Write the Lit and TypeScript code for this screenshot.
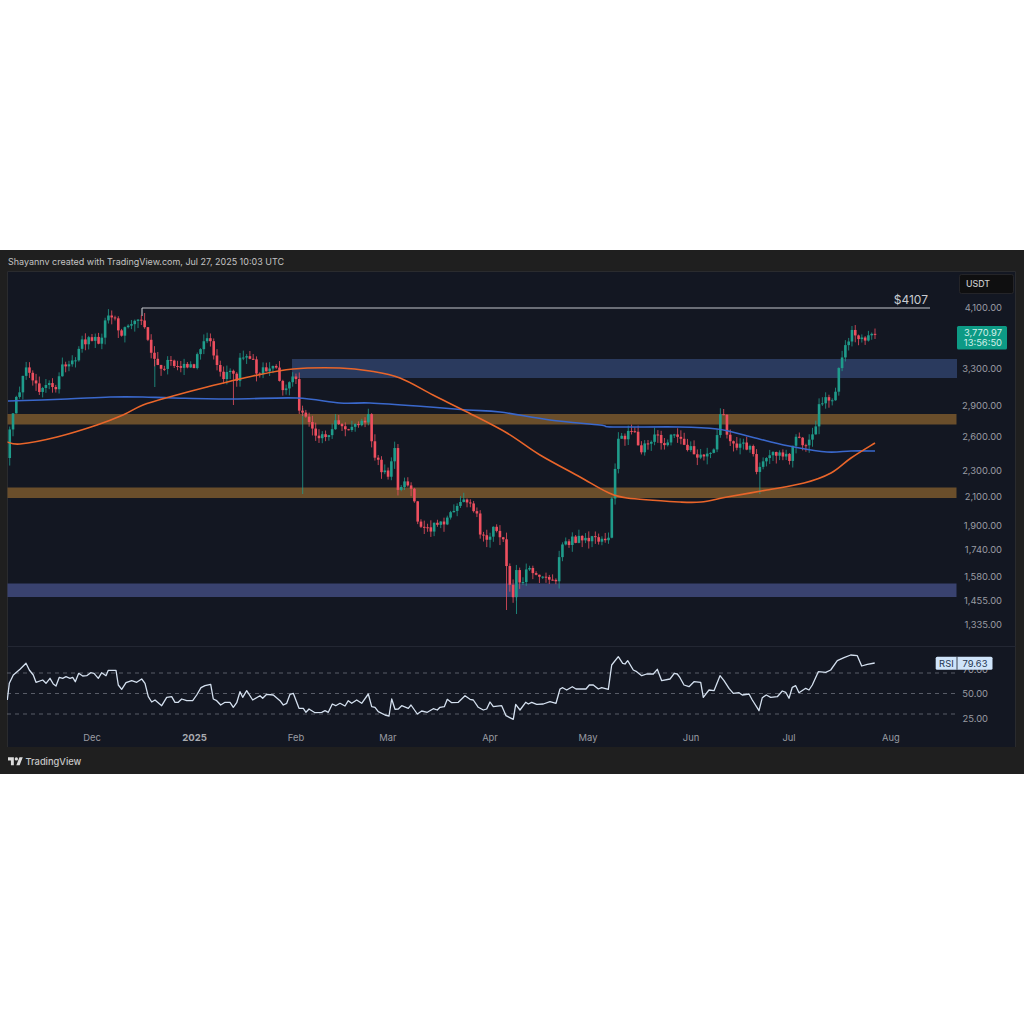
import { LitElement, html, css, svg } from "lit";
import { customElement } from "lit/decorators.js";

type P = [number, number];

const PRICE: P[] = [[7,458],[10,425],[15,405],[20,387],[27,365],[33,377],[38,390],[50,380],[58,390],[60,367],[75,363],[80,342],[88,340],[95,338],[100,343],[103,328],[108,317],[117,317],[120,343],[125,328],[133,323],[143,320],[148,343],[153,360],[162,373],[168,355],[177,367],[193,367],[202,343],[213,340],[214,362],[222,378],[233,373],[237,382],[240,358],[253,358],[254,375],[265,368],[277,370],[283,390],[288,385],[295,372],[298,388],[299,408],[308,417],[315,433],[330,438],[335,423],[340,425],[355,428],[370,415],[372,447],[382,470],[390,482],[392,447],[396,447],[397,488],[407,482],[417,508],[418,530],[430,528],[440,523],[447,520],[453,512],[463,502],[477,512],[480,537],[488,540],[492,527],[505,540],[507,577],[513,597],[517,563],[520,588],[527,568],[540,578],[557,578],[560,548],[573,540],[593,537],[610,540],[612,495],[615,468],[618,440],[628,435],[632,428],[642,450],[660,432],[662,445],[673,435],[684,445],[704,458],[716,445],[719,417],[726,418],[727,433],[734,445],[751,447],[757,473],[762,458],[771,455],[782,453],[791,458],[794,442],[799,438],[804,445],[814,437],[817,417],[819,402],[834,400],[837,385],[839,362],[844,352],[851,333],[858,337],[861,342],[866,338],[875,333]];

const BLUE: P[] = [[8,401],[67,399],[110,397],[143,397],[173,398],[233,399],[297,398],[340,403],[370,403],[417,406],[467,410],[500,412],[550,420],[600,425],[613,427],[680,427],[717,429],[744,435],[771,442],[794,447],[827,452],[851,451],[875,451]];

const ORANGE: P[] = [[7,442],[20,444],[57,437],[97,425],[123,415],[143,405],[173,396],[207,387],[253,376],[293,369],[340,368],[370,371],[400,378],[433,395],[467,412],[507,433],[540,455],[580,477],[607,492],[627,498],[680,502],[701,502],[727,497],[767,490],[804,483],[831,473],[851,458],[875,443]];

const z4: P[] = [[22,570],[28,520],[40,495],[60,478],[78,460],[88,480],[100,495],[108,517],[128,510],[138,520],[150,505],[160,522],[168,528],[178,502],[188,505],[198,500],[210,505],[218,502],[226,515],[236,490],[248,498],[260,497],[272,488],[282,490],[295,505],[305,488],[318,497],[325,481],[348,481],[355,525],[365,538],[378,518],[395,512],[410,517],[425,507],[435,520],[445,560],[455,576],[465,570],[485,587],[500,562],[515,560],[525,577],[535,577],[545,567],[560,572],[578,572],[590,555],[603,533],[615,527],[632,523],[640,567],[650,572],[662,585],[675,577],[690,577],[700,592],[710,578],[720,545],[728,562],[740,542],[758,570],[780,557],[788,565],[800,553],[820,555],[840,572],[850,585],[860,580],[870,553],[880,550],[897,595],[910,595],[918,607],[927,597],[945,608],[965,607],[975,602],[985,607],[997,582],[1007,587],[1020,580]];
const z5: P[] = [[15,588],[25,572],[35,580],[50,570],[65,580],[85,552],[95,590],[105,592],[115,605],[135,615],[147,618],[155,567],[165,598],[175,597],[185,587],[205,595],[213,585],[232,612],[245,603],[262,607],[280,596],[292,600],[300,592],[313,590],[322,568],[335,578],[355,577],[375,557],[390,568],[400,570],[415,592],[430,600],[440,597],[450,576],[460,590],[485,587],[498,617],[520,628],[527,583],[540,600],[557,577],[565,582],[575,577],[590,583],[610,582],[630,575],[648,580],[660,537],[668,533],[680,540],[697,530],[708,537],[738,537],[748,525],[760,525],[775,537],[785,533],[805,538],[815,465],[835,440],[848,460],[855,462],[863,452],[880,480],[890,485],[905,497],[920,492],[940,492],[952,478],[965,512],[990,507],[1003,490],[1012,492],[1020,503]];
const z6: P[] = [[0,525],[15,530],[30,515],[50,517],[58,562],[75,540],[90,542],[108,497],[120,512],[135,535],[148,550],[165,548],[175,555],[195,552],[205,570],[225,602],[235,563],[247,555],[260,562],[280,560],[295,543],[305,547],[315,565],[325,532],[335,527],[345,548],[365,535],[375,540],[385,525],[403,485],[425,487],[440,480],[460,452],[480,443],[500,435],[520,437],[533,468],[550,463],[572,459]];
const RSI: P[] = [
  ...z4.map(([x, y]): P => [x / 3, 510 + y / 3]),
  ...z5.map(([x, y]): P => [340 + x / 3, 510 + y / 3]),
  ...z6.map(([x, y]): P => [684 + x / 3, 510 + y / 3]),
];

const pts = (a: P[]) => a.map(([x, y]) => `${x.toFixed(1)},${y.toFixed(1)}`).join(" ");
// Catmull-Rom through the moving-average anchors, so the averages read as curves.
const smooth = (a: P[]) => {
  let d = `M${a[0][0]} ${a[0][1]}`;
  for (let i = 0; i < a.length - 1; i++) {
    const p0 = a[Math.max(i - 1, 0)];
    const p1 = a[i];
    const p2 = a[i + 1];
    const p3 = a[Math.min(i + 2, a.length - 1)];
    const c1x = p1[0] + (p2[0] - p0[0]) / 6;
    const c1y = p1[1] + (p2[1] - p0[1]) / 6;
    const c2x = p2[0] - (p3[0] - p1[0]) / 6;
    const c2y = p2[1] - (p3[1] - p1[1]) / 6;
    d += `C${c1x.toFixed(1)} ${c1y.toFixed(1)} ${c2x.toFixed(1)} ${c2y.toFixed(1)} ${p2[0]} ${p2[1]}`;
  }
  return d;
};
const interp = (a: P[], x: number) => {
  for (let i = 1; i < a.length; i++) {
    if (x <= a[i][0]) {
      const [x0, y0] = a[i - 1];
      const [x1, y1] = a[i];
      return y0 + ((y1 - y0) * (x - x0)) / Math.max(x1 - x0, 0.01);
    }
  }
  return a[a.length - 1][1];
};
const rnd = (i: number) => {
  const s = Math.sin(i * 127.1 + 11.7) * 43758.5453;
  return s - Math.floor(s);
};

const WICK_LOW: Record<number, number> = { 233: 405, 760: 494, 507: 610 };
const WICK_HIGH: Record<number, number> = { 723: 409, 851: 326, 143: 313, 108: 310 };
// Long wicks with a colour of their own: [x, top, bottom, class].
const EXTRA: [number, number, number, string][] = [
  [154.8, 360, 387, "up"],
  [302.7, 408, 494, "up"],
  [516.5, 585, 614, "up"],
];

interface Candle { x: number; o: number; c: number; h: number; l: number }
const CANDLES: Candle[] = (() => {
  const out: Candle[] = [];
  let prev = 458;
  for (let i = 1; i <= 264; i++) {
    const x = 875 - (264 - i) * 3.29;
    const c = interp(PRICE, x) + (rnd(i) - 0.5) * 8;
    let h = Math.min(prev, c) - rnd(i + 300) * 7;
    let l = Math.max(prev, c) + rnd(i + 600) * 8;
    for (const k of Object.keys(WICK_LOW)) if (Math.abs(+k - x) < 1.65) l = Math.max(l, WICK_LOW[+k]);
    for (const k of Object.keys(WICK_HIGH)) if (Math.abs(+k - x) < 1.65) h = Math.min(h, WICK_HIGH[+k]);
    out.push({ x, o: prev, c, h, l });
    prev = c;
  }
  return out;
})();

const AXIS: [string, number][] = [["4,100.00",308],["3,300.00",369],["2,900.00",405.7],["2,600.00",437],["2,300.00",471],["2,100.00",497],["1,900.00",525.7],["1,740.00",550],["1,580.00",577],["1,455.00",600.7],["1,335.00",625]];
const MONTHS: [string, number, boolean][] = [["Dec",92,false],["2025",194.5,true],["Feb",296,false],["Mar",388,false],["Apr",490,false],["May",588,false],["Jun",691,false],["Jul",789,false],["Aug",891,false]];

@customElement("app-root")
export class AppRoot extends LitElement {
  static styles = css`
    :host {
      display: flex;
      flex-direction: column;
      height: 1024px;
      background: #fff;
      font-family: Inter, "Liberation Sans", sans-serif;
    }
    .frame {
      margin-top: 250px;
      height: 524px;
      background: #1f1f1f;
      display: flex;
      flex-direction: column;
      padding: 0 8px 0 7px;
      box-sizing: border-box;
    }
    .head {
      height: 21px;
      display: flex;
      align-items: center;
      padding-left: 1px;
      padding-top: 2px;
      box-sizing: border-box;
      font-size: 8.97px;
      color: #c4c4c4;
      white-space: nowrap;
    }
    .chart { display: block; width: 1009px; height: 476px; }
    .foot {
      flex: 1;
      display: flex;
      align-items: center;
      gap: 3px;
      padding-left: 0.5px;
      padding-top: 1px;
      font-size: 9.3px;
      font-weight: 500;
      color: #c8c8c8;
    }
    .foot svg { width: 15px; height: 10px; fill: #dcdcdc; }
    .bg { fill: #131722; }
    .edge { fill: none; stroke: #2a2b2e; stroke-width: 1; }
    .sep { stroke: #232733; stroke-width: 1; }
    .z-blue { fill: #2a3a5e; }
    .z-brown { fill: #6a4e2b; }
    .z-indigo { fill: #39426f; }
    .level { stroke: #c4c6cb; stroke-width: 1.1; }
    .tag { fill: #c9cbd0; font-size: 12px; text-anchor: end; }
    .up { stroke: #1f9c8b; fill: #1f9c8b; }
    .down { stroke: #ee4f5f; fill: #ee4f5f; }
    .body { stroke: none; }
    .wick { stroke-width: 0.8; }
    .blue { fill: none; stroke: #3a68cc; stroke-width: 1.6; }
    .orange { fill: none; stroke: #e9652a; stroke-width: 1.6; }
    .rsi { fill: none; stroke: #d4e0ef; stroke-width: 1.3; stroke-linejoin: round; }
    .dash { stroke: #6b6f78; stroke-width: 0.8; stroke-dasharray: 4 4; }
    .ax { fill: #9a9ca3; font-size: 9.4px; text-anchor: end; }
    .mon { fill: #9a9ca3; font-size: 9.4px; text-anchor: middle; }
    .mon.bold { font-weight: 700; font-size: 9.6px; fill: #a8aab0; }
    .cur { fill: #0f0f10; stroke: #2a2a2c; stroke-width: 0.8; }
    .cur-t { fill: #c8c8c8; font-size: 8.8px; font-weight: 500; }
    .plabel { fill: #0d9a85; }
    .plabel-t { fill: #d3f0ea; font-size: 9.4px; text-anchor: end; }
    .rbadge { fill: #cfe4fa; }
    .rbadge-line { stroke: #131722; stroke-width: 0.8; }
    .rbadge-t { fill: #1f3550; font-size: 9.4px; text-anchor: middle; }
  `;

  render() {
    return html`
      <div class="frame">
        <div class="head">Shayannv created with TradingView.com, Jul 27, 2025 10:03 UTC</div>
        <svg class="chart" viewBox="7 271 1009 476" role="img">
          <defs><clipPath id="plot"><rect x="7.5" y="271" width="950" height="376"></rect></clipPath></defs>
          <rect class="bg" x="7" y="271" width="1009" height="476"></rect>
          <path class="edge" d="M7.5 747V271.5H1015.5V747"></path>
          <line class="sep" x1="7" x2="1016" y1="646.5" y2="646.5"></line>

          <rect class="z-blue" x="292" y="359" width="665" height="19"></rect>
          <rect class="z-brown" x="7.5" y="414" width="949" height="10.5"></rect>
          <rect class="z-brown" x="7.5" y="487.5" width="949" height="10.5"></rect>
          <rect class="z-indigo" x="7.5" y="583.5" width="949" height="13.5"></rect>

          <line class="level" x1="142" x2="930" y1="308" y2="308"></line>
          <line class="level" x1="142" x2="142" y1="308" y2="316"></line>
          <text class="tag" x="928" y="304">$4107</text>

          <g clip-path="url(#plot)">
            ${EXTRA.map(([x, a, b, c]) => svg`<line class="${c} wick" x1=${x} x2=${x} y1=${a} y2=${b}></line>`)}
            ${CANDLES.map((k) => {
              const cls = k.c <= k.o ? "up" : "down";
              const top = Math.min(k.o, k.c);
              const hgt = Math.max(Math.abs(k.o - k.c), 1);
              return svg`<line class="${cls} wick" x1=${k.x} x2=${k.x} y1=${k.h} y2=${k.l}></line>
                <rect class="${cls} body" x=${k.x - 1.3} y=${top} width="2.6" height=${hgt}></rect>`;
            })}
            <path class="blue" d=${smooth(BLUE)}></path>
            <path class="orange" d=${smooth(ORANGE)}></path>
          </g>

          ${AXIS.map(([t, y]) => svg`<text class="ax" x="1002" y=${y + 3.4}>${t}</text>`)}

          <rect class="cur" x="959.5" y="274.5" width="54" height="19" rx="2"></rect>
          <text class="cur-t" x="966" y="287">USDT</text>

          <rect class="plabel" x="957" y="326" width="50" height="23.5" rx="1.5"></rect>
          <text class="plabel-t" x="1002" y="335.5">3,770.97</text>
          <text class="plabel-t" x="1002" y="346">13:56:50</text>

          <line class="dash" x1="7" x2="956" y1="673" y2="673"></line>
          <line class="dash" x1="7" x2="956" y1="693.5" y2="693.5"></line>
          <line class="dash" x1="7" x2="956" y1="714" y2="714"></line>
          <polyline class="rsi" points=${pts(RSI)}></polyline>

          <text class="ax" x="988" y="672.5">70.00</text>
          <text class="ax" x="988" y="696.8">50.00</text>
          <text class="ax" x="988" y="722.4">25.00</text>

          <rect class="rbadge" x="935.7" y="656.7" width="56.8" height="13" rx="1.5"></rect>
          <line class="rbadge-line" x1="957" x2="957" y1="656.7" y2="669.7"></line>
          <text class="rbadge-t" x="946.4" y="666.6">RSI</text>
          <text class="rbadge-t" x="975" y="666.6">79.63</text>

          ${MONTHS.map(([t, x, b]) => svg`<text class="mon ${b ? "bold" : ""}" x=${x} y="741.4">${t}</text>`)}
        </svg>
        <div class="foot">
          <svg viewBox="0 0 36 24" aria-hidden="true">
            <path d="M14 22H7V11H0V3h14v19zM28 22h-8l7.5-19h8L28 22z"></path>
            <circle cx="20" cy="7" r="4"></circle>
          </svg>
          <span>TradingView</span>
        </div>
      </div>
    `;
  }
}
